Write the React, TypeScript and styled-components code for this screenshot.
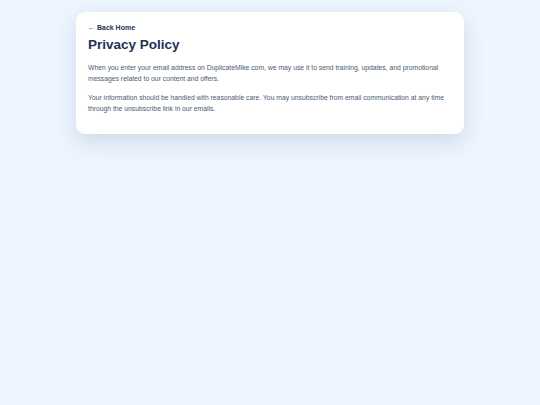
import styled, { createGlobalStyle } from 'styled-components';

const GlobalStyle = createGlobalStyle`
  html, body {
    margin: 0;
    padding: 0;
    background: #eef5ff;
    font-family: "Liberation Sans", Arial, sans-serif;
  }
`;

const Page = styled.main`
  min-height: 405px;
  padding: 12px 0;
  box-sizing: border-box;
  display: flex;
  justify-content: center;
  align-items: flex-start;
`;

const Card = styled.article`
  width: 388px;
  box-sizing: border-box;
  background: #ffffff;
  border-radius: 9px;
  padding: 11px 12px 20px;
  box-shadow: 0 8px 22px rgba(30, 58, 100, 0.15);
`;

const BackLink = styled.a`
  display: block;
  font-size: 7px;
  font-weight: 700;
  color: #1e3553;
  text-decoration: none;
  line-height: 9px;
`;

const Title = styled.h1`
  margin: 5px 0 9px;
  font-size: 13.5px;
  line-height: 16px;
  font-weight: 700;
  color: #1c3355;
`;

const Paragraph = styled.p`
  margin: 0 0 8px;
  font-size: 6.8px;
  line-height: 11px;
  color: #4b5a70;

  &:last-child {
    margin-bottom: 0;
  }
`;

const App = () => (
  <>
    <GlobalStyle />
    <Page>
      <Card>
        <BackLink href="#">← Back Home</BackLink>
        <Title>Privacy Policy</Title>
        <Paragraph>
          When you enter your email address on DuplicateMike.com, we may use it to send training, updates, and promotional
          messages related to our content and offers.
        </Paragraph>
        <Paragraph>
          Your information should be handled with reasonable care. You may unsubscribe from email communication at any time
          through the unsubscribe link in our emails.
        </Paragraph>
      </Card>
    </Page>
  </>
);

export default App;
